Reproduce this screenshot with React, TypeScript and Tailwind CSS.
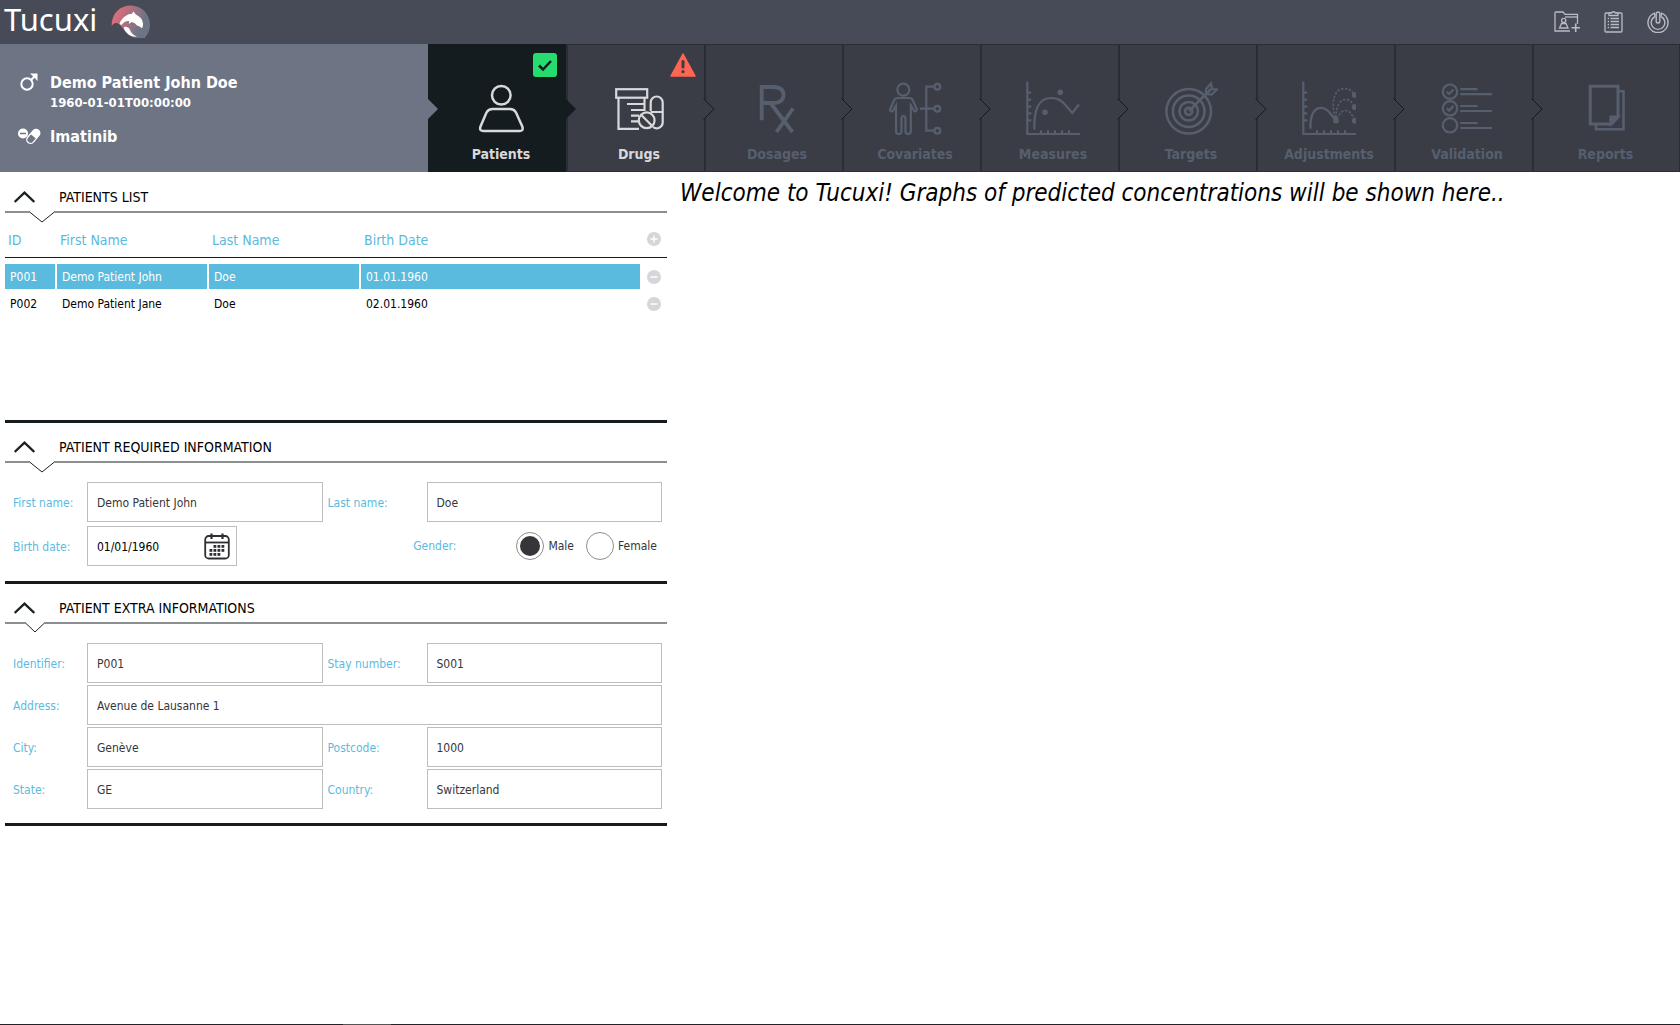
import { useState } from 'react'
import type { ReactNode } from 'react'

/* ---------- header artwork ---------- */

function Logo() {
  return (
    <svg width="40" height="34" viewBox="0 0 40 34" aria-hidden="true">
      <defs>
        <linearGradient id="logo-fill" x1="0" y1="0" x2="1" y2="0.35">
          <stop offset="0.1" stopColor="#e86d79" />
          <stop offset="0.9" stopColor="#6d7486" />
        </linearGradient>
      </defs>
      <path
        d="M0.6 21 C0.6 8 9 0.4 19.8 0.4 C30.5 0.4 39 9 39 19.5 C39 25 37 29.500 33.500 33 L26 33 C20 33 15 28 11.500 23 C8.500 18.500 5 16 1.500 20 Z"
        fill="url(#logo-fill)"
      />
      <path
        d="M8.500 18.500 C11.500 12 16.500 8.700 21 8.700 C21.500 7.800 22 7.100 22.600 6.600 C23.200 7.600 24 8.800 25 9.700 C29.500 11.500 31.800 15 32 19 C32 21 31.600 22.500 31 23.300 C29.500 22 28 21 26 20.500 C24.500 18.500 22.500 17.300 20.500 17 C19.800 17.800 18.800 18.500 17.800 18.700 C17.800 17.800 18 16.900 18.400 16.200 C15.500 15.800 13 16.800 11.500 19 C10.500 20.200 9.300 20.200 8.500 18.500 Z"
        fill="#fff"
      />
      <path
        d="M13 22 C15.500 21.300 18 22.500 19 25 C20 28 22.500 30.300 26 31.600 C21 32.300 16.500 29.500 14.500 26.300 C13.500 24.800 12.500 23 13 22 Z"
        fill="#fff"
      />
    </svg>
  )
}

function FolderIcon() {
  return (
    <svg width="26" height="22" viewBox="0 0 26 22" fill="none" stroke="#b9bcc2" strokeWidth="1.300" aria-hidden="true">
      <path d="M16 20 H1 V2 Q1 1 2 1 H9 L11 3.300 H23.500 V13" />
      <path d="M11 6 H23.500" />
      <circle cx="9.700" cy="9.500" r="2.100" />
      <path d="M7.500 12.500 H12 L14 17 H5.500 Z" />
      <path d="M21.700 12.500 V21 M17.500 16.700 H26" strokeWidth="1.600" />
    </svg>
  )
}

function ClipboardIcon() {
  return (
    <svg width="19" height="22" viewBox="0 0 19 22" fill="none" stroke="#b9bcc2" strokeWidth="1.300" aria-hidden="true">
      <rect x="1" y="2" width="17" height="19" rx="1" />
      <path d="M5 4.500 V2 H7.500 Q9.500 -0.500 11.500 2 H14 V4.500 Z" fill="#464b57" />
      <path d="M6.500 7.500 H15 M6.500 10.500 H15 M6.500 13.500 H15 M6.500 16.500 H15" />
      <path d="M3.700 7.500 H5 M3.700 10.500 H5 M3.700 13.500 H5 M3.700 16.500 H5" />
    </svg>
  )
}

function PowerIcon() {
  return (
    <svg width="22" height="22" viewBox="0 0 22 22" fill="none" stroke="#b9bcc2" strokeWidth="1.400" strokeLinejoin="round" aria-hidden="true">
      <path d="M7.500 2.200 A10 10 0 1 0 14.500 2.200 L14 5.500 A6.800 6.800 0 1 1 8 5.500 Z" />
      <rect x="9.200" y="1" width="3.600" height="11" rx="1.800" />
    </svg>
  )
}

function MaleIcon() {
  return (
    <svg width="18" height="18" viewBox="0 0 18 18" fill="none" stroke="#fff" aria-hidden="true">
      <circle cx="7" cy="11" r="5.700" strokeWidth="2" />
      <path d="M11 7 L15 3" strokeWidth="2.200" />
      <path d="M10 0.500 H17.500 V8 L15.300 5.500 L12.500 2.700 Z" fill="#fff" stroke="none" />
    </svg>
  )
}

function PillsIcon() {
  return (
    <svg width="23" height="17" viewBox="0 0 23 17" aria-hidden="true">
      <circle cx="5" cy="5.500" r="5" fill="#fff" />
      <path d="M2 5.500 H8" stroke="#6d7585" strokeWidth="1.500" />
      <g transform="rotate(40 15.500 8.500)">
        <rect x="11.500" y="0.500" width="7.500" height="16" rx="3.700" fill="#6d7585" stroke="#fff" strokeWidth="1.300" />
        <path d="M11.500 8.500 V4.200 A3.700 3.700 0 0 1 19 4.200 V8.500 Z" fill="#fff" />
      </g>
    </svg>
  )
}

/* ---------- step icons, all on a 54px canvas ---------- */

function StepCanvas({ children }: { children: ReactNode }) {
  return (
    <svg width="54" height="54" viewBox="0 0 54 54" fill="none" stroke="currentColor" strokeWidth="2.200" aria-hidden="true">
      {children}
    </svg>
  )
}

const patientsIcon = (
  <StepCanvas>
    <circle cx="27.300" cy="14.300" r="9.300" strokeWidth="2.500" />
    <path d="M18.500 28 H36 Q40 28 42 31.500 L48.300 45.500 Q49.800 50 45.500 50 H9.500 Q5 50 6.500 45.500 L12.500 31.500 Q14.500 28 18.500 28 Z" strokeWidth="2.500" />
  </StepCanvas>
)

const drugsIcon = (
  <StepCanvas>
    <rect x="4.200" y="8.200" width="31" height="8.500" />
    <path d="M27 47.800 H6.500 V16.700 M32.500 16.700 V30" />
    <path d="M15 23 H32.500 M19 29 H32 M19 34.700 H27 M19 40.300 H26.500" />
    <path d="M38.700 30 V21.500 A6 6 0 0 1 50.700 21.500 V41.500 A6 6 0 0 1 41 46 M38.700 31 H50.700" />
    <circle cx="34.700" cy="39.300" r="7.900" />
    <path d="M29.300 34 L40 44.800" />
  </StepCanvas>
)

const dosagesIcon = (
  <StepCanvas>
    <path d="M11.700 39.300 V6 H23 Q33.500 6 33.500 14 Q33.500 22 23 22 H11.700" strokeWidth="3.800" />
    <path d="M20.500 22 L42.500 51 M43 27.500 L26.500 51" strokeWidth="3.800" />
  </StepCanvas>
)

const covariatesIcon = (
  <StepCanvas>
    <circle cx="15.300" cy="8.700" r="6" />
    <path d="M9.500 17 H21.500 Q24 17 25 19.500 L28.700 28 Q29 30.500 26.500 30.500 L22.800 24.500 V50 Q22.800 53 20 53 Q17.500 53 17.500 50 V38 Q17.500 35 15.500 35 Q13.500 35 13.500 38 V50 Q13.500 53 10.800 53 Q8 53 8 50 V24.500 L4.500 30.500 Q1.500 30.500 2.300 28 L6 19.500 Q7 17 9.500 17 Z" />
    <path d="M46 5.700 H38.300 V49.700 H46 M32 27.700 H46" />
    <circle cx="49.300" cy="5.700" r="2.900" />
    <circle cx="49.300" cy="27.700" r="2.900" />
    <circle cx="49.300" cy="49.700" r="2.900" />
  </StepCanvas>
)

const axes = (
  <path d="M1.300 0.500 V53 H54 M1.300 11.700 H5.300 M1.300 18.700 H5.300 M1.300 25.700 H5.300 M1.300 32.300 H5.300 M1.300 39.300 H5.300 M15 53 V49.300 M22 53 V49.300 M29 53 V49.300 M36 53 V49.300 M43 53 V49.300" />
)

const measuresIcon = (
  <StepCanvas>
    {axes}
    <path d="M8.300 48.500 C8 30 11.500 17 25.500 17 C36 17 39.500 24.500 46.300 32 L53 23.500" />
    <circle cx="34.300" cy="11.300" r="2.800" fill="currentColor" stroke="none" />
    <circle cx="19" cy="31.300" r="2.800" fill="currentColor" stroke="none" />
  </StepCanvas>
)

const targetsIcon = (
  <StepCanvas>
    <circle cx="24.700" cy="30.300" r="22.300" strokeWidth="2.500" />
    <circle cx="24.700" cy="30.300" r="15.800" strokeWidth="2.500" />
    <circle cx="24.700" cy="30.300" r="9.300" strokeWidth="2.500" />
    <circle cx="24.700" cy="30.300" r="3.600" strokeWidth="2.500" />
    <path d="M25 30 L47 8" strokeWidth="2.500" />
    <path d="M42 13 V8 L47 2.500 L48 8 L53 8.500 L47.500 13.500 Z" />
  </StepCanvas>
)

const adjustmentsIcon = (
  <StepCanvas>
    {axes}
    <path d="M8.500 47.700 C8 34 12 26.800 19 26.800 C26 26.800 29 34 34 39.700" />
    <path d="M33 37 C29 20 32 7.500 42.500 7.500 C47 7.500 50 10 52.700 14 M34 37 C34 25 38 18.500 43.500 18.500 C48 18.500 50.500 21.500 52.700 26.300 M35 38 C37.500 32 40.500 29.500 44 29.500 C47.500 29.500 50 33 52.700 39.700" strokeWidth="1.600" strokeDasharray="2.500 1.500" />
    <g fill="currentColor" stroke="none">
      <circle cx="34" cy="39.700" r="2.800" />
      <circle cx="52.700" cy="14" r="2.800" />
      <circle cx="52.700" cy="26.300" r="2.800" />
      <circle cx="52.700" cy="39.700" r="2.800" />
    </g>
  </StepCanvas>
)

const validationIcon = (
  <StepCanvas>
    <circle cx="10" cy="10.700" r="7.200" />
    <circle cx="10" cy="27.300" r="7.200" />
    <circle cx="10" cy="44.300" r="7.200" />
    <path d="M6.700 10.700 L9 13 L13.500 8.500 M6.700 27.300 L9 29.600 L13.500 25.100" />
    <path d="M20.300 8.200 H37.500 M20.300 13.200 H52 M20.300 25 H37.500 M20.300 30 H52 M20.300 42 H37.500 M20.300 47 H52" />
  </StepCanvas>
)

const reportsIcon = (
  <StepCanvas>
    <path d="M40 10.200 H44.500 V48.300 H17 V43.500" strokeWidth="2.500" />
    <path d="M11.200 5.200 H39 V36 L32.500 43 H11.200 Z" strokeWidth="3" />
    <path d="M31.500 43.500 V35.500 H39.500 Z" fill="currentColor" />
  </StepCanvas>
)

type Step = { name: string; icon: ReactNode; state: 'active' | 'next' | 'disabled'; before: 'panel' | 'active' | 'plain' }

const steps: Step[] = [
  { name: 'Patients', icon: patientsIcon, state: 'active', before: 'panel' },
  { name: 'Drugs', icon: drugsIcon, state: 'next', before: 'active' },
  { name: 'Dosages', icon: dosagesIcon, state: 'disabled', before: 'plain' },
  { name: 'Covariates', icon: covariatesIcon, state: 'disabled', before: 'plain' },
  { name: 'Measures', icon: measuresIcon, state: 'disabled', before: 'plain' },
  { name: 'Targets', icon: targetsIcon, state: 'disabled', before: 'plain' },
  { name: 'Adjustments', icon: adjustmentsIcon, state: 'disabled', before: 'plain' },
  { name: 'Validation', icon: validationIcon, state: 'disabled', before: 'plain' },
  { name: 'Reports', icon: reportsIcon, state: 'disabled', before: 'plain' },
]

const stepTone = {
  active: 'bg-[#151c1f] border-[#151c1f] text-[#d8d9dc]',
  next: 'bg-[#3a3d46] border-[#2a2d35] text-[#d8d9dc]',
  disabled: 'bg-[#3a3d46] border-[#2a2d35] text-[#575f6e]',
}

const arrowFill = { panel: '#6d7585', active: '#151c1f', plain: '#3a3d46' }

function StepArrow({ kind }: { kind: Step['before'] }) {
  return (
    <svg className="absolute -left-[3px] top-[53px]" width="12" height="22" viewBox="0 0 12 22" aria-hidden="true">
      <path d="M0 1 H1 L11 11 L1 21 H0 Z" fill={arrowFill[kind]} />
      {kind === 'plain' && <path d="M0.500 0.500 L11 11 L0.500 21.500" fill="none" stroke="#15191d" />}
    </svg>
  )
}

function CheckBadge() {
  return (
    <svg className="absolute right-[9px] top-2" width="24" height="24" viewBox="0 0 24 24" aria-hidden="true">
      <rect width="24" height="24" rx="3" fill="#25dc6e" />
      <path d="M6 12.500 L10 16.500 L18 8" fill="none" stroke="#151c1f" strokeWidth="2.500" />
    </svg>
  )
}

function WarningBadge() {
  return (
    <svg className="absolute right-2 top-2" width="26" height="24" viewBox="0 0 26 24" aria-hidden="true">
      <path d="M13 1 L25 23 H1 Z" fill="#ff6550" stroke="#ff6550" strokeWidth="1.500" strokeLinejoin="round" />
      <rect x="11.500" y="7" width="3" height="8.500" rx="1.500" fill="#3a3d46" />
      <circle cx="13" cy="18.700" r="1.600" fill="#3a3d46" />
    </svg>
  )
}

function StepButton({ step }: { step: Step }) {
  const last = step.name === 'Reports'
  return (
    <button
      type="button"
      disabled={step.state === 'disabled'}
      className={`relative flex flex-col items-center border-t border-b border-l-2 pt-9 pb-[7px] ${last ? 'border-r pr-0.5' : 'pl-1.5'} ${stepTone[step.state]}`}
    >
      <StepArrow kind={step.before} />
      {step.name === 'Patients' && <CheckBadge />}
      {step.name === 'Drugs' && <WarningBadge />}
      {step.icon}
      <span className="mt-[9px] text-sm leading-5 font-bold">{step.name}</span>
    </button>
  )
}

/* ---------- sections ---------- */

function Divider({ notch }: { notch: 'wide' | 'narrow' }) {
  return (
    <div className="flex h-0.5">
      <div className={`bg-[#8b8f8f] ${notch === 'wide' ? 'w-6' : 'w-5'}`} />
      {notch === 'wide' ? (
        <svg className="overflow-visible" width="26" height="2" viewBox="0 0 26 2" aria-hidden="true">
          <path d="M0 0.500 L13 11 L26 0.500" fill="none" stroke="#1b2226" />
        </svg>
      ) : (
        <svg className="overflow-visible" width="20" height="2" viewBox="0 0 20 2" aria-hidden="true">
          <path d="M0 0.500 L10 10 L20 0.500" fill="none" stroke="#1b2226" />
        </svg>
      )}
      <div className="flex-1 bg-[#8b8f8f]" />
    </div>
  )
}

function Section({ title, notch = 'wide', className, children }: { title: string; notch?: 'wide' | 'narrow'; className: string; children: ReactNode }) {
  const [open, setOpen] = useState(true)
  return (
    <section className={`border-b-3 border-[#151c1f] ${className}`}>
      <h2>
        <button type="button" aria-expanded={open} onClick={() => setOpen(!open)} className="flex w-full items-center gap-6 pt-3.5 pb-1 pl-[9px] text-left text-sm leading-5">
          <svg width="21" height="12" viewBox="0 0 21 12" fill="none" stroke="#1b2226" strokeWidth="2.300" aria-hidden="true">
            <path d="M0.700 11 L10.500 1.600 L20.300 11" />
          </svg>
          {title}
        </button>
      </h2>
      <Divider notch={notch} />
      {open && children}
    </section>
  )
}

function RoundButton({ label, plus }: { label: string; plus?: boolean }) {
  return (
    <button type="button" aria-label={label} className="ml-[5px] block">
      <svg width="14" height="14" viewBox="0 0 14 14" aria-hidden="true">
        <circle cx="7" cy="7" r="7" fill="#d5d6d9" />
        <path d={plus ? 'M3.500 7 H10.500 M7 3.500 V10.500' : 'M3.500 7 H10.500'} stroke="#fff" strokeWidth="1.400" />
      </svg>
    </button>
  )
}

const patients = [
  { id: 'P001', first: 'Demo Patient John', last: 'Doe', birth: '01.01.1960' },
  { id: 'P002', first: 'Demo Patient Jane', last: 'Doe', birth: '02.01.1960' },
]

function PatientsTable() {
  const head = 'border-b border-[#151c1f] pt-[15px] pb-[5px] pl-[3px] text-left text-sm leading-6 font-normal text-[#5bb9dc]'
  return (
    <table className="w-full table-fixed border-separate border-spacing-0">
      <colgroup>
        <col className="w-[52px]" />
        <col className="w-[152px]" />
        <col className="w-[152px]" />
        <col />
        <col className="w-[25px]" />
      </colgroup>
      <thead>
        <tr>
          <th className={head}>ID</th>
          <th className={head}>First Name</th>
          <th className={head}>Last Name</th>
          <th className={head}>Birth Date</th>
          <th className="border-b border-[#151c1f] pt-2 font-normal">
            <RoundButton label="Add patient" plus />
          </th>
        </tr>
      </thead>
      <tbody>
        {patients.map((p, i) => {
          const cell = `border-r-2 border-b-2 border-white bg-clip-padding pt-0.5 pl-[5px] leading-[23px] ${
            i === 0 ? 'border-t-6 bg-[#5bbbde] text-white' : 'text-black'
          }`
          return (
            <tr key={p.id}>
              <td className={cell}>{p.id}</td>
              <td className={cell}>{p.first}</td>
              <td className={cell}>{p.last}</td>
              <td className={cell}>{p.birth}</td>
              <td className={`border-b-2 border-white ${i === 0 ? 'border-t-6' : ''}`}>
                <RoundButton label={`Remove ${p.first} ${p.last}`} />
              </td>
            </tr>
          )
        })}
      </tbody>
    </table>
  )
}

function Field({ id, label, value, wide }: { id: string; label: string; value: string; wide?: boolean }) {
  return (
    <>
      <label htmlFor={id} className="pt-0.5 pl-[5px] text-[#5bbbde]">
        {label}
      </label>
      <input id={id} defaultValue={value} className={`h-10 w-full min-w-0 border border-[#bdbdbd] px-[9px] pt-0.5 text-[#35363a] outline-none ${wide ? 'col-span-3' : ''}`} />
    </>
  )
}

function GenderOption({ label, checked }: { label: string; checked?: boolean }) {
  return (
    <label className="flex items-center gap-1 text-[#35363a]">
      <input
        type="radio"
        name="gender"
        defaultChecked={checked}
        className="size-7 appearance-none rounded-full border border-[#8e8e8e] bg-white bg-clip-content p-[3px] checked:bg-[#353639]"
      />
      {label}
    </label>
  )
}

function CalendarIcon() {
  const dots = [
    [10, 13], [14, 13], [18, 13],
    [6, 17], [10, 17], [14, 17], [18, 17],
    [6, 21], [10, 21], [14, 21],
  ]
  return (
    <svg width="26" height="27" viewBox="0 0 26 27" fill="none" stroke="#2d2f33" strokeWidth="1.800" aria-hidden="true">
      <rect x="1.200" y="3" width="23.600" height="22.500" rx="3.500" />
      <path d="M1.200 9.500 H24.800" />
      <path d="M7.500 0.500 V6 M18.500 0.500 V6" strokeWidth="2.200" />
      {dots.map(([x, y]) => (
        <rect key={`${x}-${y}`} x={x - 0.500} y={y - 1} width="2.800" height="2.800" fill="#2d2f33" stroke="none" />
      ))}
    </svg>
  )
}

const grid = 'grid grid-cols-[79px_minmax(0,1fr)_104px_minmax(0,1fr)] items-center pt-[19px] pl-[3px] pr-[5px]'

export default function App() {
  return (
    <div className="flex min-h-screen flex-col bg-white font-['DejaVu_Sans_Condensed','DejaVu_Sans',sans-serif] text-xs text-black">
      <header className="flex h-11 items-center bg-[#464b57] pr-[11px] pl-1">
        <h1 className="pb-1.5 font-['Noto_Sans',sans-serif] text-[31px] leading-9 text-white">Tucuxi</h1>
        <div className="ml-3.5">
          <Logo />
        </div>
        <div className="ml-auto flex items-center gap-6">
          <button type="button" aria-label="New patient folder"><FolderIcon /></button>
          <button type="button" aria-label="Clipboard"><ClipboardIcon /></button>
          <button type="button" aria-label="Quit"><PowerIcon /></button>
        </div>
      </header>

      <div className="grid grid-cols-[428px_repeat(8,minmax(0,138fr))_minmax(0,148fr)]">
        <div className="grid grid-cols-[30px_1fr] content-start gap-y-[14px] bg-[#6d7585] pt-[29px] pl-5 font-bold text-white">
          <div><MaleIcon /></div>
          <div>
            <p className="text-base leading-5">Demo Patient John Doe</p>
            <p className="text-[13px] leading-5">1960-01-01T00:00:00</p>
          </div>
          <div className="-ml-0.5 pt-px"><PillsIcon /></div>
          <p className="text-base leading-5">Imatinib</p>
        </div>
        {steps.map((s) => (
          <StepButton key={s.name} step={s} />
        ))}
      </div>

      <main className="flex flex-1">
        <div className="w-2/5 px-[5px]">
          <Section title="PATIENTS LIST" className="min-h-[251px] pt-px">
            <PatientsTable />
          </Section>

          <Section title="PATIENT REQUIRED INFORMATION" className="pb-[15px]">
            <form className={`${grid} gap-y-1`}>
              <Field id="first-name" label="First name:" value="Demo Patient John" />
              <Field id="last-name" label="Last name:" value="Doe" />
              <label htmlFor="birth-date" className="pt-0.5 pl-[5px] text-[#5bbbde]">Birth date:</label>
              <div className="flex h-10 w-[150px] items-center border border-[#bdbdbd] pr-1.5 pl-[9px]">
                <input id="birth-date" defaultValue="01/01/1960" className="w-full min-w-0 pt-0.5 outline-none" />
                <button type="button" aria-label="Open calendar" className="shrink-0"><CalendarIcon /></button>
              </div>
              <fieldset className="col-span-2 flex items-center justify-end gap-3 pr-[5px]">
                <legend className="float-left mr-12 text-[#5bbbde]">Gender:</legend>
                <GenderOption label="Male" checked />
                <GenderOption label="Female" />
              </fieldset>
            </form>
          </Section>

          <Section title="PATIENT EXTRA INFORMATIONS" notch="narrow" className="pb-3.5">
            <form className={`${grid} gap-y-0.5`}>
              <Field id="identifier" label="Identifier:" value="P001" />
              <Field id="stay-number" label="Stay number:" value="S001" />
              <Field id="address" label="Address:" value="Avenue de Lausanne 1" wide />
              <Field id="city" label="City:" value="Genève" />
              <Field id="postcode" label="Postcode:" value="1000" />
              <Field id="state" label="State:" value="GE" />
              <Field id="country" label="Country:" value="Switzerland" />
            </form>
          </Section>
        </div>
        <div className="flex-1 px-2 pt-[5px]">
          <p className="text-2xl leading-8 italic">Welcome to Tucuxi! Graphs of predicted concentrations will be shown here..</p>
        </div>
      </main>

      <footer className="flex h-px bg-[#222326] pl-[343px]">
        <div className="w-12 bg-[#555555]" />
      </footer>
    </div>
  )
}
